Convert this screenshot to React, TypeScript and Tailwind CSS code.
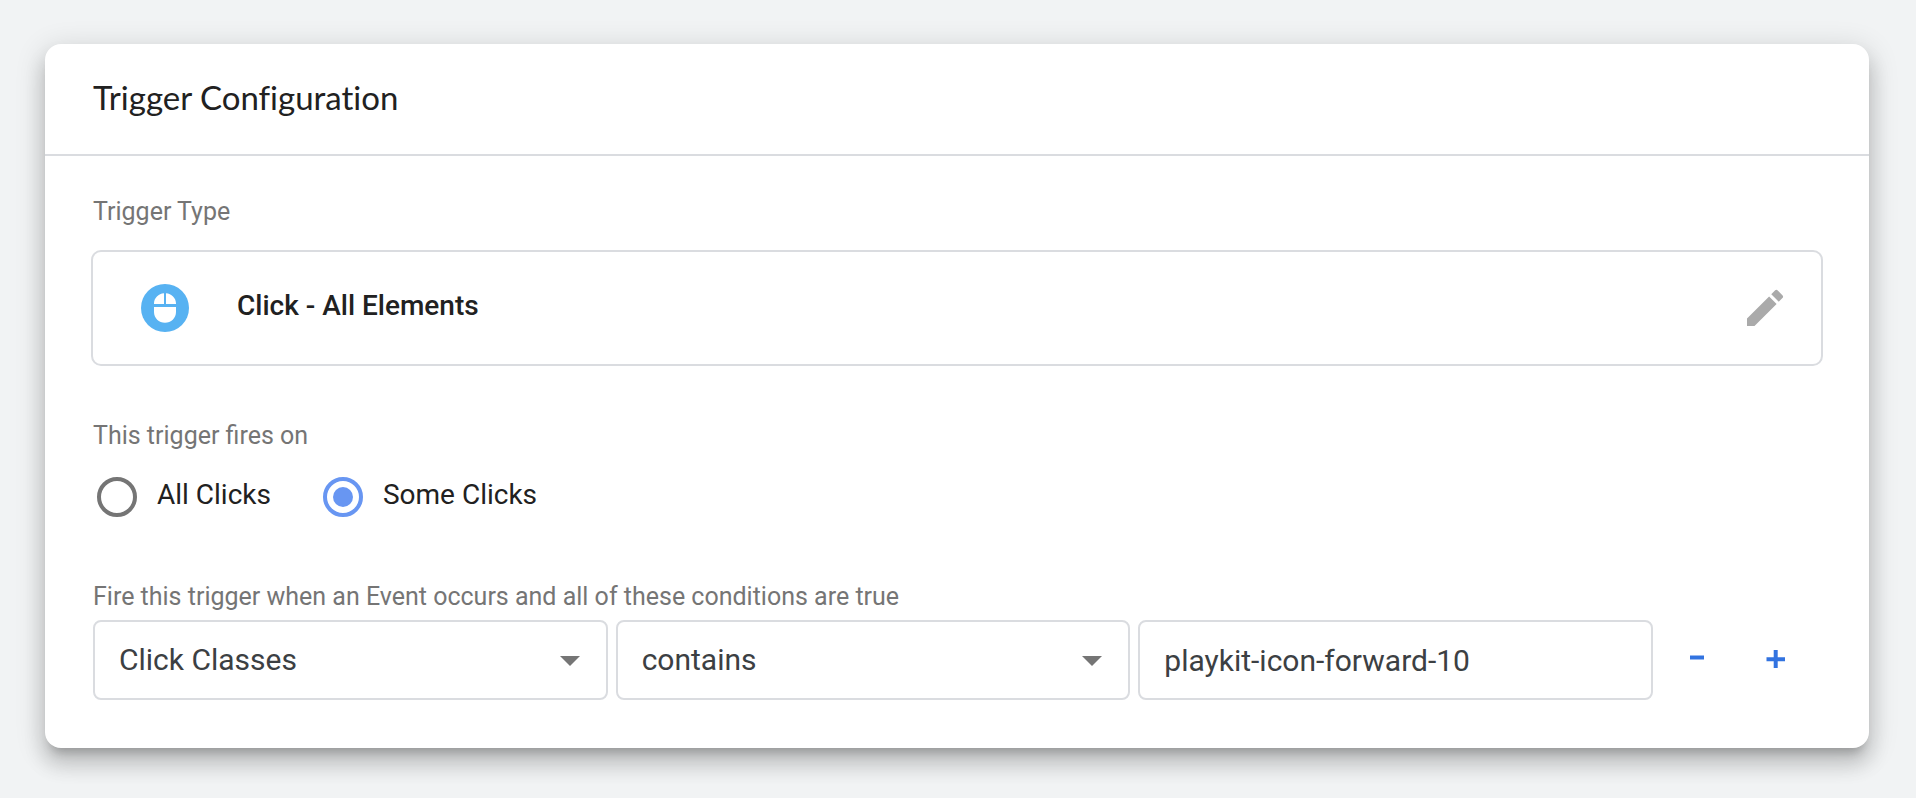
import { useState } from "react";
import type { ReactNode } from "react";

const fieldClass =
  "h-20 w-full appearance-none rounded-lg border-2 border-[#dadce0] bg-white px-6 text-[30px] leading-9 text-[#3c4043] outline-none focus:border-[#1a73e8]";

function MouseIcon() {
  return (
    <svg viewBox="0 0 48 48" className="size-12 shrink-0" aria-hidden="true">
      <circle cx="24" cy="24" r="24" fill="#57b2f2" />
      <path
        fill="#fff"
        d="M23 9.3V20H13v-.5C13 14 17.500 9.800 23 9.300zM25 9.300C30.500 9.800 35 14 35 19.500V20H25zM13 23h22v5c0 6-4.900 10.800-11 10.800S13 34 13 28z"
      />
    </svg>
  );
}

function PencilIcon() {
  return (
    <svg viewBox="0 0 24 24" className="size-12" fill="#aaaaaa" aria-hidden="true">
      <path d="M3 17.250V21h3.750L17.810 9.940l-3.750-3.750L3 17.250zM20.710 7.040a.996.996 0 0 0 0-1.410l-2.340-2.340a.996.996 0 0 0-1.410 0l-1.830 1.830 3.750 3.750 1.830-1.830z" />
    </svg>
  );
}

function Radio(props: { label: string; checked: boolean; onSelect: () => void }) {
  return (
    <label className="flex items-center gap-5">
      <input
        type="radio"
        name="fires-on"
        checked={props.checked}
        onChange={props.onSelect}
        className="grid size-10 appearance-none place-content-center rounded-full border-4 border-[#757575] before:size-5 before:rounded-full checked:border-[#6896f2] checked:before:bg-[#6896f2]"
      />
      <span className="pb-1 text-[28px] leading-8 text-[#212121]">{props.label}</span>
    </label>
  );
}

function Select(props: { label: string; options: string[] }) {
  return (
    <div className="grid items-center">
      <select aria-label={props.label} className={`${fieldClass} col-start-1 row-start-1`}>
        {props.options.map((option) => (
          <option key={option}>{option}</option>
        ))}
      </select>
      <svg
        viewBox="0 0 20 10"
        className="pointer-events-none col-start-1 row-start-1 mt-0.5 mr-7 h-2.5 w-5 justify-self-end"
        fill="#757575"
        aria-hidden="true"
      >
        <path d="M0 0h20L10 10z" />
      </svg>
    </div>
  );
}

function Caption({ children }: { children: ReactNode }) {
  return <h2 className="pl-0.5 text-[25px] leading-7 text-[#757575]">{children}</h2>;
}

export default function App() {
  const [firesOn, setFiresOn] = useState("some");

  return (
    <main className="min-h-screen bg-[#f1f3f4] pt-11 pr-[47px] pb-12 pl-[45px] font-[Roboto,sans-serif]">
      <section className="rounded-2xl bg-white shadow-[0_16px_20px_2px_rgba(0,0,0,0.14),0_6px_28px_4px_rgba(0,0,0,0.12),0_10px_10px_-6px_rgba(0,0,0,0.2)]">
        <header className="border-b-2 border-[#dadce0] px-12 pt-[33px] pb-[37px]">
          <h1 className="font-[Lato,sans-serif] text-[33px] leading-10 text-[#212121] [font-variant-ligatures:none]">
            Trigger Configuration
          </h1>
        </header>

        <div className="px-[46px] pt-[42px] pb-12">
          <Caption>Trigger Type</Caption>
          <div className="mt-6 flex h-[116px] items-center rounded-[10px] border-2 border-[#dadce0] pr-8 pl-12">
            <MouseIcon />
            <span className="ml-12 grow pb-1 text-[28px] leading-8 font-medium text-[#212121]">
              Click - All Elements
            </span>
            <button type="button" aria-label="Edit trigger type">
              <PencilIcon />
            </button>
          </div>

          <div className="mt-14">
            <Caption>This trigger fires on</Caption>
            <div className="mt-[27px] flex gap-[52px] pl-1.5">
              <Radio label="All Clicks" checked={firesOn === "all"} onSelect={() => setFiresOn("all")} />
              <Radio label="Some Clicks" checked={firesOn === "some"} onSelect={() => setFiresOn("some")} />
            </div>
          </div>

          <div className="mt-[66px]">
            <Caption>Fire this trigger when an Event occurs and all of these conditions are true</Caption>
            <div className="mt-[9px] flex items-center pl-0.5">
              <div className="grid grow grid-cols-3 gap-2">
                <Select label="Variable" options={["Click Classes", "Click ID", "Click URL"]} />
                <Select label="Operator" options={["contains", "equals", "starts with"]} />
                <input aria-label="Value" defaultValue="playkit-icon-forward-10" className={fieldClass} />
              </div>
              <div className="ml-5 flex gap-[31px] pr-[23px]">
                <button type="button" aria-label="Remove condition">
                  <svg viewBox="0 0 48 48" className="size-12" fill="#3273e0" aria-hidden="true">
                    <path d="M17 19.500h14v4H17z" />
                  </svg>
                </button>
                <button type="button" aria-label="Add condition">
                  <svg viewBox="0 0 48 48" className="size-12" fill="#3273e0" aria-hidden="true">
                    <path d="M21.700 14h4v7.300H33v4h-7.300V32h-4v-6.700H14.500v-4h7.200z" />
                  </svg>
                </button>
              </div>
            </div>
          </div>
        </div>
      </section>
    </main>
  );
}
